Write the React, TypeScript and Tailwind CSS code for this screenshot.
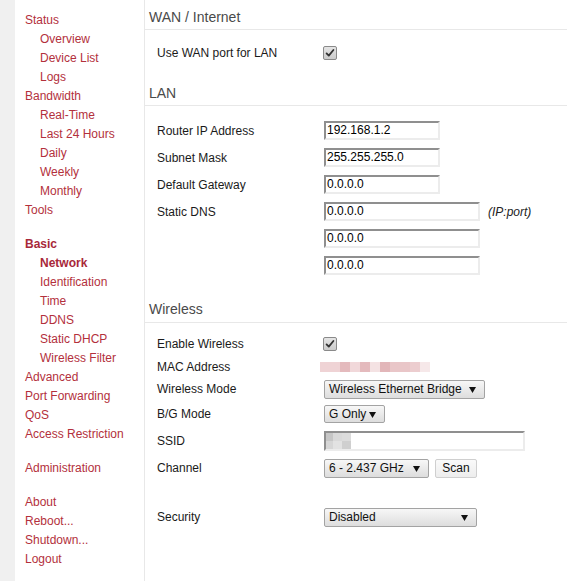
import React from "react";

const RED = "text-[#b3303c]";

function NavItem({ label, sub, bold }: { label: string; sub?: boolean; bold?: boolean }) {
  return (
    <div className={`leading-[19px] h-[19px] ${sub ? "pl-[15px]" : ""} ${bold ? "font-bold text-[#a8283a]" : RED} whitespace-nowrap`}>
      {label}
    </div>
  );
}

function Heading({ children, top, pb }: { children: React.ReactNode; top: string; pb: string }) {
  return (
    <div className={`${top} ${pb} pl-[4px] border-b border-[#e8e8e8] text-[14px] leading-[20px] text-[#4a4a4a]`}>
      {children}
    </div>
  );
}

function Row({ label, h, children }: { label?: string; h: string; children?: React.ReactNode }) {
  return (
    <div className={`flex items-center ${h} pl-[12px]`}>
      <div className="w-[167px] shrink-0 text-[#1a1a1a] whitespace-nowrap">{label}</div>
      <div className="flex items-center">{children}</div>
    </div>
  );
}

function TextInput({ value, w }: { value: string; w: string }) {
  return (
    <div
      className={`${w} h-[19px] border-2 border-t-[#8f8f8f] border-l-[#8f8f8f] border-b-[#ececec] border-r-[#ececec] bg-white text-[12px] leading-[15px] pl-[1px] text-black`}
    >
      {value}
    </div>
  );
}

function Tri() {
  return (
    <svg width="7" height="7" viewBox="0 0 7 7" className="shrink-0">
      <path d="M0 1 L7 1 L3.5 7 Z" fill="#111" />
    </svg>
  );
}

function Select({ value, w, h = "h-[19px]" }: { value: string; w: string; h?: string }) {
  return (
    <div
      className={`${w} ${h} flex items-center justify-between pl-[4px] pr-[8px] border border-[#a3a3a3] rounded-[2px] bg-gradient-to-b from-[#f7f7f7] to-[#dddddd] text-[12px] text-[#111]`}
    >
      <span className="whitespace-nowrap">{value}</span>
      <Tri />
    </div>
  );
}

function Checkbox() {
  return (
    <svg width="14" height="14" viewBox="0 0 14 14" className="ml-[-1px]">
      <defs>
        <linearGradient id="cbg" x1="0" y1="0" x2="0" y2="1">
          <stop offset="0" stopColor="#e6e6e6" />
          <stop offset="1" stopColor="#cacaca" />
        </linearGradient>
      </defs>
      <rect x="0.5" y="0.5" width="13" height="13" rx="1.5" fill="url(#cbg)" stroke="#8a8a8a" />
      <path d="M3.6 7.4 L5.8 9.6 L10.4 4" fill="none" stroke="#333" strokeWidth="1.8" strokeLinecap="round" strokeLinejoin="round" />
    </svg>
  );
}

export default function App() {
  const mac = ["#efd3d5", "#efd3d5", "#e4babd", "#f1d8da", "#e4babd", "#f4e2e3", "#e2b6b9", "#e9c6c8", "#e9c6c8", "#eccdcf", "#f6e8e9"];
  return (
    <div
      className="flex w-[567px] h-[581px] bg-white text-[12px] overflow-hidden"
      style={{ fontFamily: '"Liberation Sans", Arial, sans-serif' }}
    >
      <div className="w-[15px] shrink-0 bg-[#f0f0f0]" />
      <div className="w-[130px] shrink-0 border-r border-[#e8e8e8] pl-[10px] pt-[11px]">
        <NavItem label="Status" />
        <NavItem label="Overview" sub />
        <NavItem label="Device List" sub />
        <NavItem label="Logs" sub />
        <NavItem label="Bandwidth" />
        <NavItem label="Real-Time" sub />
        <NavItem label="Last 24 Hours" sub />
        <NavItem label="Daily" sub />
        <NavItem label="Weekly" sub />
        <NavItem label="Monthly" sub />
        <NavItem label="Tools" />
        <div className="h-[15px]" />
        <NavItem label="Basic" bold />
        <NavItem label="Network" sub bold />
        <NavItem label="Identification" sub />
        <NavItem label="Time" sub />
        <NavItem label="DDNS" sub />
        <NavItem label="Static DHCP" sub />
        <NavItem label="Wireless Filter" sub />
        <NavItem label="Advanced" />
        <NavItem label="Port Forwarding" />
        <NavItem label="QoS" />
        <NavItem label="Access Restriction" />
        <div className="h-[15px]" />
        <NavItem label="Administration" />
        <div className="h-[15px]" />
        <NavItem label="About" />
        <NavItem label="Reboot..." />
        <NavItem label="Shutdown..." />
        <NavItem label="Logout" />
      </div>
      <div className="flex-1 flex flex-col">
        <Heading top="mt-[7px]" pb="pb-[2px]">WAN / Internet</Heading>
        <div className="mt-[9px]">
          <Row label="Use WAN port for LAN" h="h-[27px]">
            <Checkbox />
          </Row>
        </div>
        <Heading top="mt-[17px]" pb="pb-[2px]">LAN</Heading>
        <div className="mt-[11px]">
          <Row label="Router IP Address" h="h-[27px]">
            <TextInput value="192.168.1.2" w="w-[116px]" />
          </Row>
          <Row label="Subnet Mask" h="h-[27px]">
            <TextInput value="255.255.255.0" w="w-[116px]" />
          </Row>
          <Row label="Default Gateway" h="h-[27px]">
            <TextInput value="0.0.0.0" w="w-[116px]" />
          </Row>
          <Row label="Static DNS" h="h-[27px]">
            <TextInput value="0.0.0.0" w="w-[156px]" />
            <span className="ml-[8px] italic text-[#222]">(IP:port)</span>
          </Row>
          <Row h="h-[27px]">
            <TextInput value="0.0.0.0" w="w-[156px]" />
          </Row>
          <Row h="h-[27px]">
            <TextInput value="0.0.0.0" w="w-[156px]" />
          </Row>
        </div>
        <Heading top="mt-[20px]" pb="pb-[3px]">Wireless</Heading>
        <div className="mt-[10px]">
          <Row label="Enable Wireless" h="h-[22px]">
            <Checkbox />
          </Row>
          <Row label="MAC Address" h="h-[23px]">
            <div className="flex ml-[-4px] h-[10px]">
              {mac.map((c, i) => (
                <div key={i} className="w-[10px] h-[10px]" style={{ backgroundColor: c }} />
              ))}
            </div>
          </Row>
          <Row label="Wireless Mode" h="h-[22px]">
            <Select value="Wireless Ethernet Bridge" w="w-[161px]" />
          </Row>
          <Row label="B/G Mode" h="h-[28px]">
            <Select value="G Only" w="w-[61px]" h="h-[18px]" />
          </Row>
          <Row label="SSID" h="h-[26px]">
            <div className="relative w-[201px] h-[20px] border-2 border-t-[#8f8f8f] border-l-[#8f8f8f] border-b-[#ececec] border-r-[#ececec] bg-white">
              <div className="absolute left-0 top-0 flex">
                <div className="flex flex-col">
                  <div className="w-[7px] h-[8px] bg-[#c6c6c6]" />
                  <div className="w-[7px] h-[8px] bg-[#d6d6d6]" />
                </div>
                <div className="flex flex-col">
                  <div className="w-[9px] h-[8px] bg-[#d9d9d9]" />
                  <div className="w-[9px] h-[8px] bg-[#e2e2e2]" />
                </div>
                <div className="flex flex-col">
                  <div className="w-[9px] h-[8px] bg-[#dcdcdc]" />
                  <div className="w-[9px] h-[8px] bg-[#cfcfcf]" />
                </div>
              </div>
            </div>
          </Row>
          <Row label="Channel" h="h-[28px]">
            <Select value="6 - 2.437 GHz" w="w-[105px]" />
            <div className="ml-[6px] h-[19px] w-[42px] flex items-center justify-center border border-[#cfcfcf] rounded-[2px] bg-gradient-to-b from-[#fafafa] to-[#ededed] text-[#111]">
              Scan
            </div>
          </Row>
          <div className="h-[22px]" />
          <Row label="Security" h="h-[26px]">
            <Select value="Disabled" w="w-[153px]" />
          </Row>
        </div>
      </div>
    </div>
  );
}
